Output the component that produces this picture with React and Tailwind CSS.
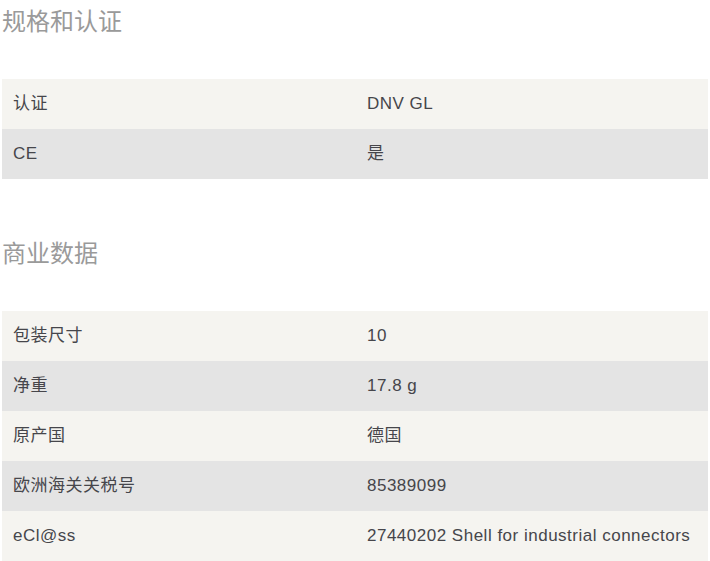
import React from 'react';

const sections = [
  {
    title: '规格和认证',
    rows: [
      ['认证', 'DNV GL'],
      ['CE', '是'],
    ],
  },
  {
    title: '商业数据',
    rows: [
      ['包装尺寸', '10'],
      ['净重', '17.8 g'],
      ['原产国', '德国'],
      ['欧洲海关关税号', '85389099'],
      ['eCl@ss', '27440202 Shell for industrial connectors'],
    ],
  },
];

const App = () => {
  return (
    <div
      className="w-[710px] h-[561px] overflow-hidden bg-white px-[2px]"
      style={{ fontFamily: '"Liberation Sans", "Noto Sans CJK SC", sans-serif' }}
    >
      {sections.map((section, i) => (
        <div key={section.title} className={i === 0 ? '' : 'mt-[53px]'}>
          <h2 className="h-[79px] pt-[4px] text-[24px] leading-[36px] text-[#9a9a9a]">
            {section.title}
          </h2>
          <div>
            {section.rows.map(([label, value], j) => (
              <div
                key={label}
                className={`grid grid-cols-2 h-[50px] items-center text-[17px] tracking-[0.5px] text-[#46464b] ${
                  j % 2 === 0 ? 'bg-[#f5f4f0]' : 'bg-[#e4e4e4]'
                }`}
              >
                <div className="pl-[11px]">{label}</div>
                <div className="pl-[12px]">{value}</div>
              </div>
            ))}
          </div>
        </div>
      ))}
    </div>
  );
};

export default App;
